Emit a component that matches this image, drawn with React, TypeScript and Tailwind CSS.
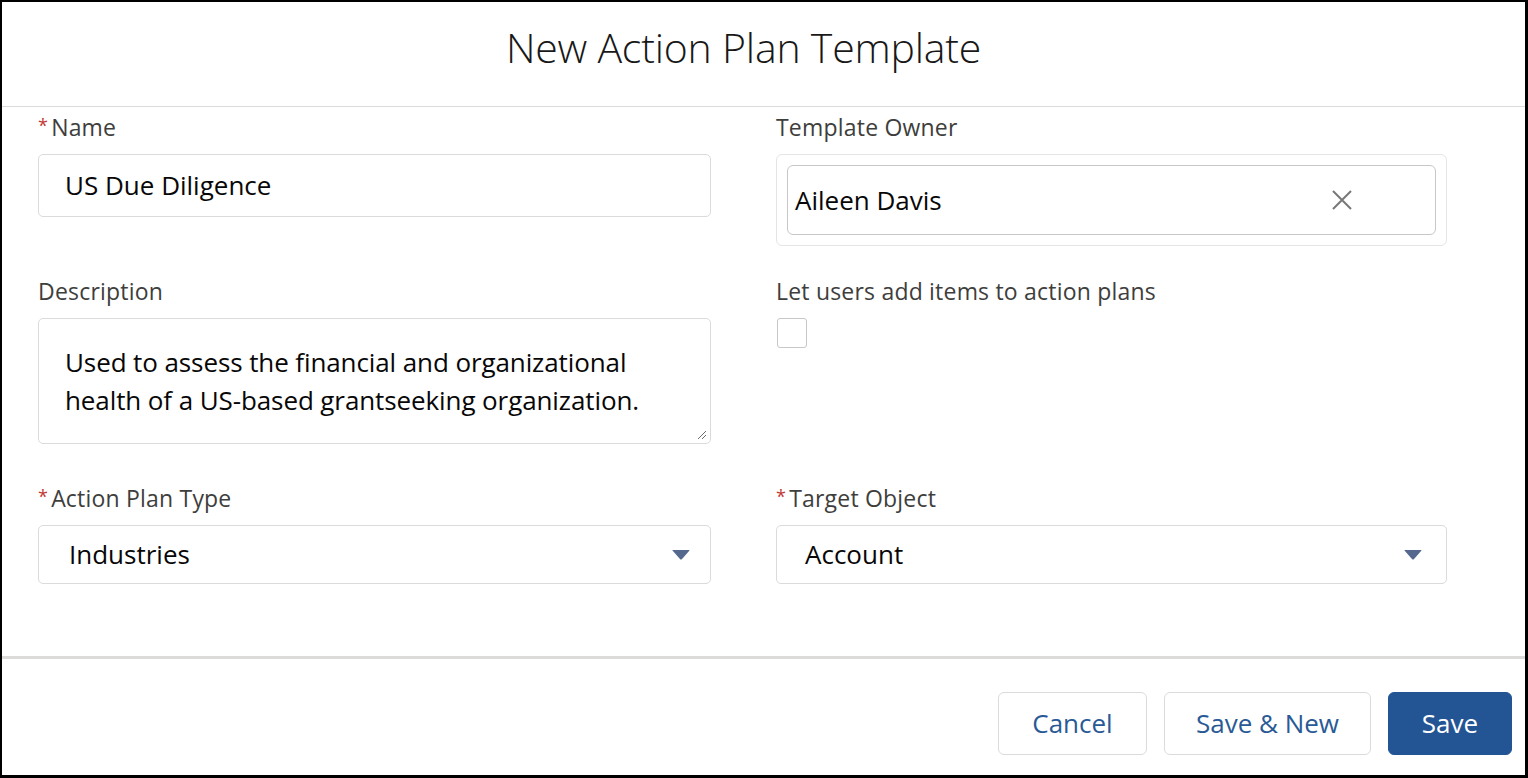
const font = { fontFamily: '"Open Sans", "Noto Sans", sans-serif' };

function Label({ text, required }: { text: string; required?: boolean }) {
  return (
    <div className="flex h-[28px] items-center text-[23px] leading-[28px] tracking-[0.2px] text-[#3e3e3c]">
      {required && <span className="mr-[3px] -mt-[4px] text-[18px] text-[#c23934]">*</span>}
      <span>{text}</span>
    </div>
  );
}

function Caret() {
  return (
    <svg width="18" height="10" viewBox="0 0 18 10" className="shrink-0">
      <path d="M1 0 L17 0 Q18 0 17.3 0.8 L9.8 9.2 Q9 10 8.2 9.2 L0.7 0.8 Q0 0 1 0 Z" fill="#54698d" />
    </svg>
  );
}

function ClearIcon() {
  return (
    <svg width="20" height="20" viewBox="0 0 20 20" className="shrink-0">
      <path d="M1 1 L19 19 M19 1 L1 19" stroke="#7a7876" strokeWidth="2" />
    </svg>
  );
}

export default function App() {
  return (
    <div
      className="flex h-[778px] w-[1528px] flex-col border-b-[3px] border-l-2 border-r-[3px] border-t-2 border-black bg-white text-[#080707]"
      style={font}
    >
      {/* header */}
      <div className="flex h-[105px] shrink-0 items-center justify-center border-b border-[#dddbda] pb-[12px] pr-[40px]">
        <h1 className="text-[41px] font-light tracking-[-0.2px] text-[#181818]">New Action Plan Template</h1>
      </div>

      {/* body */}
      <div className="grid flex-1 grid-cols-[673px_671px] content-start gap-x-[65px] pl-[36px] pt-[6px]">
        {/* Name */}
        <div className="flex flex-col">
          <Label text="Name" required />
          <div className="mt-[13px] flex h-[63px] items-center rounded-[5px] border border-[#dddbda] pl-[26px] text-[26px]">
            US Due Diligence
          </div>
        </div>
        {/* Template Owner */}
        <div className="flex flex-col">
          <Label text="Template Owner" />
          <div className="mt-[13px] rounded-[6px] border border-[#e5e5e5] p-[10px]">
            <div className="flex h-[70px] items-center justify-between rounded-[6px] border border-[#c9c7c5] pl-[7px] pr-[83px] text-[26px]">
              <span>Aileen Davis</span>
              <ClearIcon />
            </div>
          </div>
        </div>

        {/* Description */}
        <div className="mt-[31px] flex flex-col">
          <Label text="Description" />
          <div className="relative mt-[13px] h-[126px] rounded-[5px] border border-[#dddbda] pl-[26px] pt-[24px] text-[26px] leading-[38px] tracking-[-0.1px]">
            Used to assess the financial and organizational
            <br />
            health of a US-based grantseeking organization.
            <svg width="10" height="10" viewBox="0 0 10 10" className="absolute bottom-[3px] right-[3px]">
              <path d="M9 1 L1 9 M9 5 L5 9" stroke="#706e6b" strokeWidth="1" />
            </svg>
          </div>
        </div>
        {/* Let users add */}
        <div className="mt-[31px] flex flex-col">
          <Label text="Let users add items to action plans" />
          <div className="ml-[1px] mt-[13px] h-[30px] w-[30px] rounded-[3px] border border-[#c9c7c5]" />
        </div>

        {/* Action Plan Type */}
        <div className="mt-[40px] flex flex-col">
          <Label text="Action Plan Type" required />
          <div className="mt-[13px] flex h-[59px] items-center justify-between rounded-[5px] border border-[#dddbda] pl-[30px] pr-[20px] text-[26px]">
            <span>Industries</span>
            <Caret />
          </div>
        </div>
        {/* Target Object */}
        <div className="mt-[40px] flex flex-col">
          <Label text="Target Object" required />
          <div className="mt-[13px] flex h-[59px] items-center justify-between rounded-[5px] border border-[#dddbda] pl-[28px] pr-[24px] text-[26px]">
            <span>Account</span>
            <Caret />
          </div>
        </div>
      </div>

      {/* footer */}
      <div className="flex h-[119px] shrink-0 items-start justify-end gap-[17px] border-t-[3px] border-[#dddbda] pr-[13px] pt-[33px] text-[26px]">
        <button className="h-[63px] w-[149px] rounded-[6px] border border-[#dddbda] bg-white text-[#2a5a95]">
          Cancel
        </button>
        <button className="h-[63px] w-[207px] rounded-[6px] border border-[#dddbda] bg-white text-[#2a5a95]">
          Save &amp; New
        </button>
        <button className="h-[63px] w-[124px] rounded-[6px] border border-[#235594] bg-[#235594] text-white">
          Save
        </button>
      </div>
    </div>
  );
}
